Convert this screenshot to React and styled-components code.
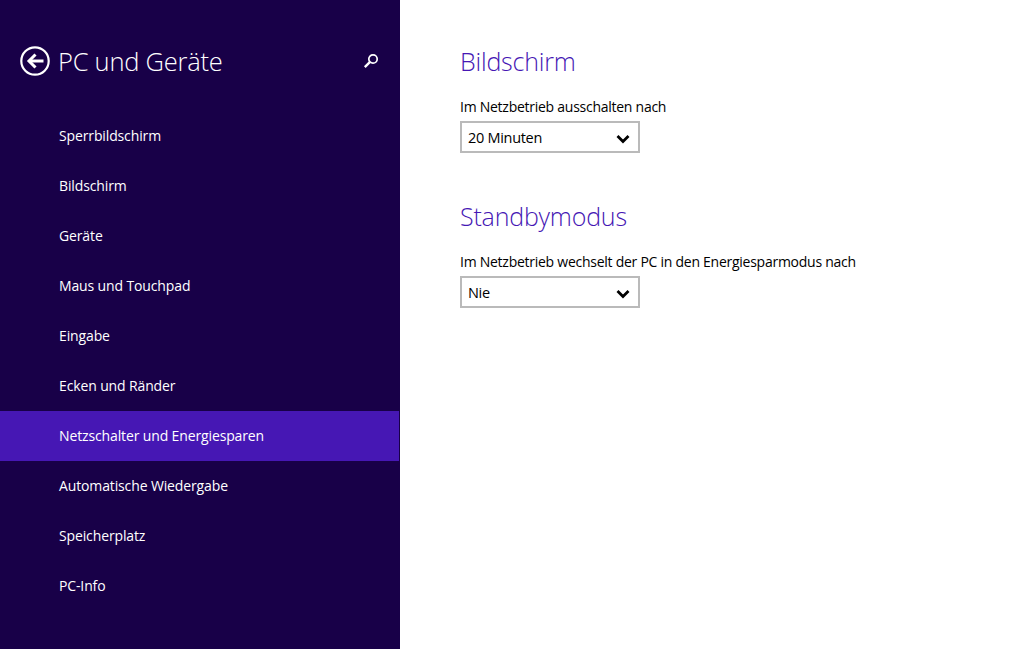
import React from "react";
import styled, { createGlobalStyle } from "styled-components";

const Global = createGlobalStyle`
  html, body { margin: 0; padding: 0; height: 100%; background: #fff; }
  #root { height: 100%; }
  body { font-family: "Open Sans", "Noto Sans", sans-serif; overflow: hidden; }
`;

const Page = styled.div`
  display: flex;
  width: 1036px;
  height: 649px;
  overflow: hidden;
`;

const Sidebar = styled.aside`
  width: 400px;
  flex: none;
  background: #180048;
  box-sizing: border-box;
  padding-top: 41px;
`;

const Header = styled.header`
  display: flex;
  align-items: center;
  height: 40px;
  padding-left: 20px;
  padding-right: 21px;
  margin-bottom: 30px;
`;

const Title = styled.h1`
  margin: 0 0 0 8px;
  flex: 1;
  font-size: 25.5px;
  font-weight: 300;
  color: #fff;
  letter-spacing: -0.25px;
  white-space: nowrap;
`;

const Nav = styled.nav`
  display: flex;
  flex-direction: column;
  padding-right: 1px;
`;

const NavItem = styled.div`
  height: 50px;
  box-sizing: border-box;
  display: flex;
  align-items: center;
  padding: 0 0 2px 59px;
  font-size: 14px;
  letter-spacing: -0.13px;
  color: #fff;
  white-space: nowrap;
  background: ${(p) => (p.$active ? "#4617b4" : "transparent")};
`;

const Main = styled.main`
  flex: 1;
  padding: 43px 0 0 60px;
  background: #fff;
`;

const Section = styled.section`
  margin-bottom: 45px;
`;

const Heading = styled.h2`
  margin: 0 0 18px;
  font-size: 25px;
  line-height: 36px;
  font-weight: 300;
  color: #4617b4;
  letter-spacing: -0.2px;
`;

const Label = styled.div`
  font-size: 14px;
  line-height: 20px;
  letter-spacing: -0.26px;
  color: #000;
  margin-bottom: 4px;
  white-space: nowrap;
`;

const Dropdown = styled.div`
  box-sizing: border-box;
  width: 180px;
  height: 32px;
  border: 2px solid #bababa;
  background: #fff;
  display: flex;
  align-items: center;
  justify-content: space-between;
  padding: 0 8px 0 6px;
  font-size: 14.5px;
  letter-spacing: -0.3px;
  color: #000;
`;

const ChevronSlot = styled.span`
  display: flex;
  padding-top: 3px;
`;

const BackIcon = () => (
  <svg width="30" height="30" viewBox="0 0 30 30" fill="none" stroke="#fff">
    <circle cx="15" cy="15" r="13.7" strokeWidth="2.2" />
    <path d="M23.5 15H9" strokeWidth="3" />
    <path d="M15.5 8.5L9 15l6.5 6.5" strokeWidth="3" />
  </svg>
);

const SearchIcon = () => (
  <svg width="16" height="16" viewBox="0 0 16 16" fill="none" stroke="#fff">
    <circle cx="10" cy="6" r="4.2" strokeWidth="1.7" />
    <path d="M6.8 9.2L1.8 14.2" strokeWidth="2.4" />
  </svg>
);

const Chevron = () => (
  <ChevronSlot>
    <svg width="14" height="10" viewBox="0 0 14 10" fill="none" stroke="#000">
      <path d="M1.5 2l5.5 5.5L12.5 2" strokeWidth="2.8" />
    </svg>
  </ChevronSlot>
);

const items = [
  "Sperrbildschirm",
  "Bildschirm",
  "Geräte",
  "Maus und Touchpad",
  "Eingabe",
  "Ecken und Ränder",
  "Netzschalter und Energiesparen",
  "Automatische Wiedergabe",
  "Speicherplatz",
  "PC-Info",
];

export default function App() {
  return (
    <Page>
      <Global />
      <Sidebar>
        <Header>
          <BackIcon />
          <Title>PC und Geräte</Title>
          <SearchIcon />
        </Header>
        <Nav>
          {items.map((t, i) => (
            <NavItem key={t} $active={i === 6}>{t}</NavItem>
          ))}
        </Nav>
      </Sidebar>
      <Main>
        <Section>
          <Heading>Bildschirm</Heading>
          <Label>Im Netzbetrieb ausschalten nach</Label>
          <Dropdown>20 Minuten<Chevron /></Dropdown>
        </Section>
        <Section>
          <Heading>Standbymodus</Heading>
          <Label>Im Netzbetrieb wechselt der PC in den Energiesparmodus nach</Label>
          <Dropdown>Nie<Chevron /></Dropdown>
        </Section>
      </Main>
    </Page>
  );
}
